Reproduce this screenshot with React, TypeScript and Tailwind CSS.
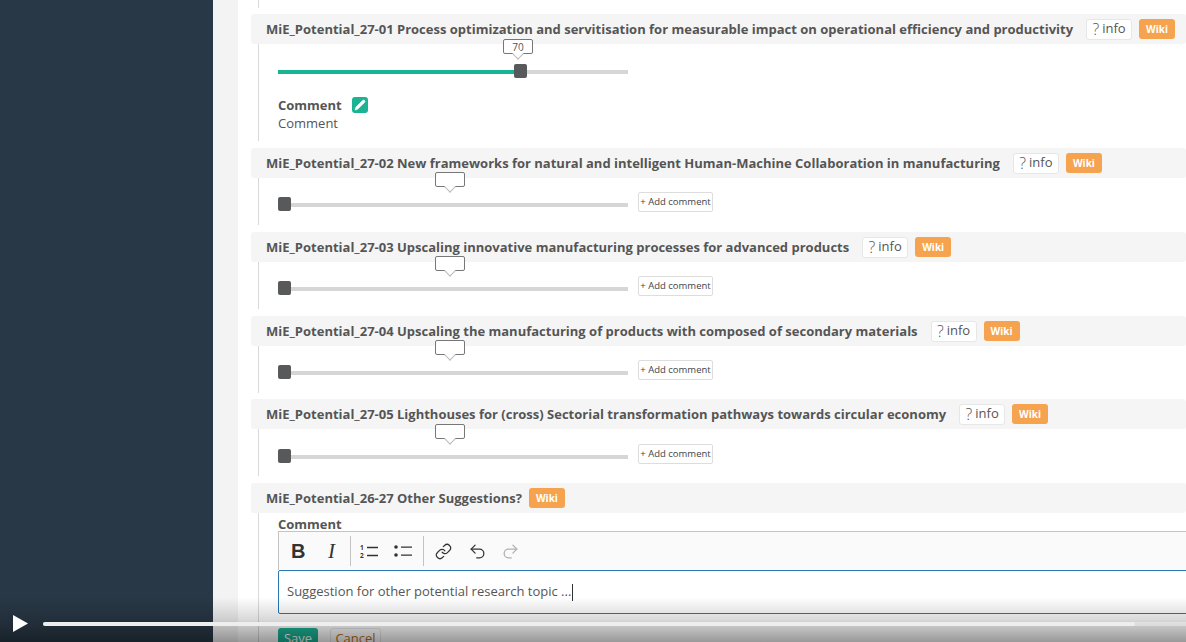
import React from 'react';
import { Pencil, Link, Undo2, Redo2 } from 'lucide-react';

const font = { fontFamily: '"Open Sans", sans-serif' };

const InfoButton = () => (
  <span className="flex h-[21px] w-[46px] shrink-0 items-center justify-center rounded-[3px] border border-[#e7e7e7] bg-white text-[13px] text-[#555]">
    <span className="mr-[3px] mb-[1px] text-[16px] leading-none font-light">?</span>
    <span className="mb-[1px]">info</span>
  </span>
);

const WikiBadge = () => (
  <span className="flex h-[20px] w-[36px] shrink-0 items-center justify-center rounded-[3px] bg-[#f6a34f] pt-[1px] text-[10px] font-bold text-white">
    Wiki
  </span>
);

const SectionHeader = ({ title, info = true }: { title: string; info?: boolean }) => (
  <div className="flex h-[30px] items-center rounded-[3px] bg-[#f5f5f5] pl-[15px]">
    <span className="mt-[1px] whitespace-nowrap text-[13px] font-bold text-[#555]">{title}</span>
    {info && (
      <span className="ml-[13px]">
        <InfoButton />
      </span>
    )}
    <span className="ml-[7px]">
      <WikiBadge />
    </span>
  </div>
);

const Bubble = ({ label, left, width }: { label?: string; left: number; width: number }) => (
  <div
    className="absolute top-[-31px] flex h-[15px] items-center justify-center rounded-[2px] border border-[#777] bg-white text-[10px] leading-none text-[#555]"
    style={{ left, width }}
  >
    {label}
    <span className="absolute bottom-[-5px] left-1/2 h-[8px] w-[8px] -translate-x-1/2 rotate-45 border-r border-b border-[#bbb] bg-white" />
  </div>
);

const Slider = ({ value }: { value: number }) => {
  const thumbLeft = value === 0 ? 0 : 236;
  return (
    <div className="relative h-[4px] w-[350px] shrink-0 bg-[#d6d6d6]">
      {value > 0 && <div className="absolute inset-y-0 left-0 bg-[#1ab394]" style={{ width: thumbLeft + 6 }} />}
      <div
        className="absolute top-[-6px] h-[14px] w-[13px] rounded-[2px] bg-[#58595b]"
        style={{ left: thumbLeft }}
      />
      {value > 0 ? <Bubble label={String(value)} left={225} width={30} /> : <Bubble left={157} width={30} />}
    </div>
  );
};

const SliderSection = ({ title, className, nudge }: { title: string; className?: string; nudge?: boolean }) => (
  <section className={className ?? 'mb-[7px]'}>
    <SectionHeader title={title} />
    <div className="ml-[7px] flex h-[47px] items-center border-l border-[#d9d9d9] pb-[2px] pl-[19px]">
      <div className={nudge ? 'mt-[11px] flex items-center' : 'mt-[9px] flex items-center'}>
        <Slider value={0} />
        <button className="mb-[6px] ml-[10px] h-[20px] w-[75px] rounded-[2px] border border-[#ddd] bg-white text-[9.5px] text-[#444]">
          + Add comment
        </button>
      </div>
    </div>
  </section>
);

const ToolbarDivider = ({ className }: { className: string }) => <span className={`h-[30px] w-px bg-[#c4c4c4] ${className}`} />;

const Editor = () => (
  <div className="w-[1000px]">
    <div className="flex h-[39px] items-center border border-b-0 border-[#c4c4c4] bg-[#fafafa] pl-[12px] text-[#333]">
      <span className="w-[24px] text-[20px] leading-none font-bold" style={{ fontFamily: '"Liberation Sans", sans-serif' }}>B</span>
      <span className="ml-[13px] w-[12px] text-[21px] leading-none italic" style={{ fontFamily: '"Liberation Serif", serif' }}>I</span>
      <ToolbarDivider className="ml-[10px] mr-[9px]" />
      <svg width="18" height="16" viewBox="0 0 18 16" fill="none" stroke="#333" strokeWidth="1.3">
        <path d="M7 4.5h11M7 12.5h11" />
        <text x="0" y="7" fontSize="6.5" fontWeight="700" fill="#333" stroke="none">1</text>
        <text x="0" y="15" fontSize="6.5" fontWeight="700" fill="#333" stroke="none">2</text>
      </svg>
      <svg className="ml-[16px]" width="18" height="14" viewBox="0 0 18 14" fill="#333" stroke="none">
        <circle cx="2" cy="3" r="1.8" />
        <circle cx="2" cy="11" r="1.8" />
        <path d="M7 2.4h11v1.3H7zM7 10.4h11v1.3H7z" />
      </svg>
      <ToolbarDivider className="ml-[11px] mr-[11px]" />
      <Link size={17} strokeWidth={1.7} />
      <Undo2 size={19} strokeWidth={1.6} className="ml-[16px]" />
      <Redo2 size={19} strokeWidth={1.6} className="ml-[14px] text-[#b0b0b0]" />
    </div>
    <div className="flex h-[44px] items-center rounded-[2px] border border-[#2977b5] bg-white pl-[8px] text-[13px] text-[#555]">
      Suggestion for other potential research topic ...
      <span className="ml-px h-[17px] w-px bg-[#333]" />
    </div>
  </div>
);

const VideoBar = () => (
  <div className="absolute inset-x-0 bottom-0 h-[45px] bg-gradient-to-b from-black/0 via-black/15 to-black/40">
    <svg className="absolute bottom-[10px] left-[13px]" width="15" height="17" viewBox="0 0 15 17" fill="white">
      <path d="M0 0l15 8.5L0 17z" />
    </svg>
    <div className="absolute right-0 bottom-[16px] left-[43px] h-[4px] rounded-l-full bg-white/35">
      <div className="h-full w-[1092px] rounded-full bg-[#eeeeee]" />
    </div>
  </div>
);

export default function App() {
  return (
    <div className="relative flex h-[642px] overflow-hidden bg-white" style={font}>
      <aside className="w-[213px] shrink-0 bg-[#293846]" />
      <div className="w-[25px] shrink-0 bg-[#f3f3f4]" />
      <main className="min-w-0 flex-1 overflow-hidden pl-[13px]">
        <div className="mb-[6px] ml-[7px] h-[8px] border-l border-[#d9d9d9]" />

        <section className="mb-[7px]">
          <SectionHeader title="MiE_Potential_27-01 Process optimization and servitisation for measurable impact on operational efficiency and productivity" />
          <div className="ml-[7px] h-[97px] border-l border-[#d9d9d9] pl-[19px]">
            <div className="pt-[26px]">
              <Slider value={70} />
            </div>
            <div className="mt-[23px] flex h-[18px] items-center text-[13px] font-bold text-[#555]">
              Comment
              <span className="mb-[3px] ml-[10px] flex h-[16px] w-[16px] items-center justify-center rounded-[3px] bg-[#1ab394]">
                <Pencil size={12} color="white" fill="white" strokeWidth={1} />
              </span>
            </div>
            <div className="text-[13px] leading-[16px] text-[#555]">Comment</div>
          </div>
        </section>

        <SliderSection title="MiE_Potential_27-02 New frameworks for natural and intelligent Human-Machine Collaboration in manufacturing" />
        <SliderSection title="MiE_Potential_27-03 Upscaling innovative manufacturing processes for advanced products" />
        <SliderSection title="MiE_Potential_27-04 Upscaling the manufacturing of products with composed of secondary materials" className="mb-[6px]" />
        <SliderSection title="MiE_Potential_27-05 Lighthouses for (cross) Sectorial transformation pathways towards circular economy" nudge />

        <section>
          <SectionHeader title="MiE_Potential_26-27 Other Suggestions?" info={false} />
          <div className="ml-[7px] border-l border-[#d9d9d9] pl-[19px]">
            <div className="h-[18px] pt-[2px] text-[13px] leading-[18px] font-bold text-[#555]">Comment</div>
            <Editor />
            <div className="mt-[14px] flex gap-[12px] text-[13px]">
              <button className="h-[22px] w-[40px] rounded-[3px] bg-[#1ab394] text-white">Save</button>
              <button className="h-[22px] w-[51px] rounded-[3px] border border-[#e7e7e7] bg-white text-[#c06c10]">Cancel</button>
            </div>
          </div>
        </section>
      </main>
      <VideoBar />
    </div>
  );
}
